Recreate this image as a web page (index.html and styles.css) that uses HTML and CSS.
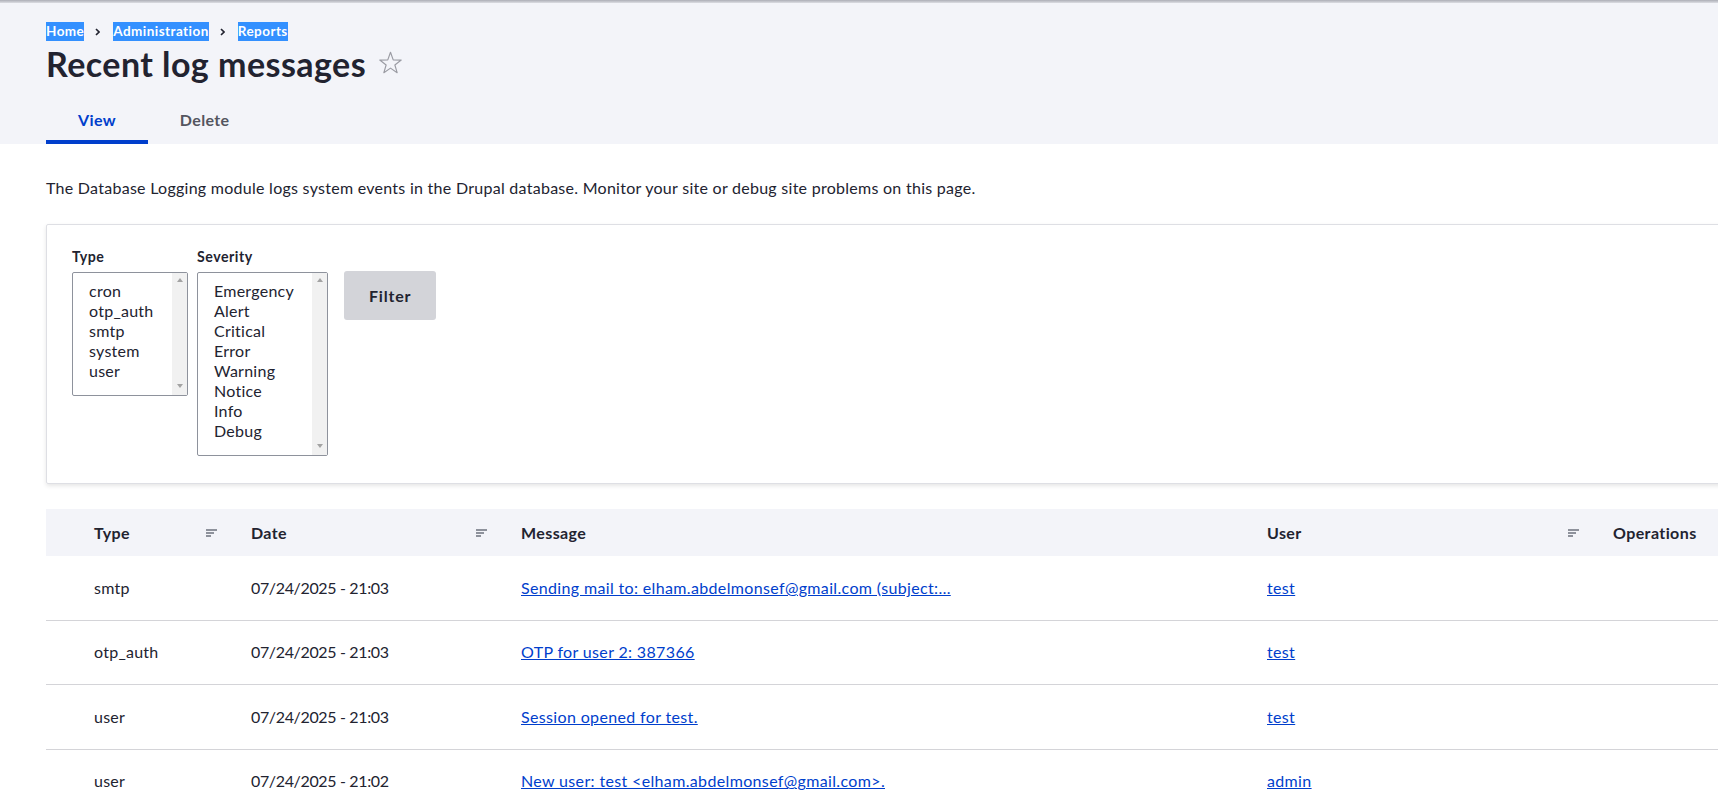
FILE: index.html
```html
<!DOCTYPE html>
<html lang="en">
<head>
<meta charset="utf-8">
<title>Recent log messages</title>
<link rel="stylesheet" href="styles.css">
</head>
<body>
<div class="toolbar-shadow"></div>
<header class="page-header">
  <nav class="breadcrumb">
    <span class="crumb">Home</span>
    <svg class="crumb-sep" viewBox="0 0 5 8"><path d="M1 1l3 3-3 3" fill="none" stroke="#222330" stroke-width="1.6"/></svg>
    <span class="crumb">Administration</span>
    <svg class="crumb-sep" viewBox="0 0 5 8"><path d="M1 1l3 3-3 3" fill="none" stroke="#222330" stroke-width="1.6"/></svg>
    <span class="crumb">Reports</span>
  </nav>
  <div class="title-row">
    <h1 class="page-title">Recent log messages</h1>
    <svg class="star" viewBox="0 0 22 22"><path d="M11 1.2L13.59 8.44L21.27 8.66L15.18 13.36L17.35 20.74L11 16.4L4.65 20.74L6.82 13.36L0.73 8.66L8.41 8.44Z" fill="none" stroke="#9a9ba3" stroke-width="1.1" stroke-linejoin="round"/></svg>
  </div>
  <nav class="tabs">
    <a class="tab is-active">View</a>
    <a class="tab">Delete</a>
  </nav>
</header>
<main class="content">
  <p class="intro">The Database Logging module logs system events in the Drupal database. Monitor your site or debug site problems on this page.</p>
  <div class="filter-box">
    <div class="form-item form-item-type">
      <div class="form-label">Type</div>
      <div class="listbox listbox-type">
        <ul class="options">
          <li>cron</li>
          <li>otp_auth</li>
          <li>smtp</li>
          <li>system</li>
          <li>user</li>
        </ul>
        <div class="scrollbar"><span class="arrow up"></span><span class="arrow down"></span></div>
      </div>
    </div>
    <div class="form-item form-item-severity">
      <div class="form-label">Severity</div>
      <div class="listbox listbox-severity">
        <ul class="options">
          <li>Emergency</li>
          <li>Alert</li>
          <li>Critical</li>
          <li>Error</li>
          <li>Warning</li>
          <li>Notice</li>
          <li>Info</li>
          <li>Debug</li>
        </ul>
        <div class="scrollbar"><span class="arrow up"></span><span class="arrow down"></span></div>
      </div>
    </div>
    <button class="button">Filter</button>
  </div>
  <table class="log-table">
    <colgroup>
      <col class="col-type">
      <col class="col-date">
      <col class="col-message">
      <col class="col-user">
      <col class="col-ops">
    </colgroup>
    <thead>
      <tr>
        <th><div class="th-inner"><span>Type</span><svg class="sort" viewBox="0 0 11 8"><rect x="0" y="0" width="11" height="2"/><rect x="0" y="3" width="8" height="2"/><rect x="0" y="6" width="5" height="2"/></svg></div></th>
        <th><div class="th-inner"><span>Date</span><svg class="sort" viewBox="0 0 11 8"><rect x="0" y="0" width="11" height="2"/><rect x="0" y="3" width="8" height="2"/><rect x="0" y="6" width="5" height="2"/></svg></div></th>
        <th>Message</th>
        <th><div class="th-inner"><span>User</span><svg class="sort" viewBox="0 0 11 8"><rect x="0" y="0" width="11" height="2"/><rect x="0" y="3" width="8" height="2"/><rect x="0" y="6" width="5" height="2"/></svg></div></th>
        <th>Operations</th>
      </tr>
    </thead>
    <tbody>
      <tr>
        <td>smtp</td>
        <td class="date">07/24/2025 - 21:03</td>
        <td><a href="#">Sending mail to: elham.abdelmonsef@gmail.com (subject:…</a></td>
        <td><a href="#">test</a></td>
        <td></td>
      </tr>
      <tr>
        <td>otp_auth</td>
        <td class="date">07/24/2025 - 21:03</td>
        <td><a href="#">OTP for user 2: 387366</a></td>
        <td><a href="#">test</a></td>
        <td></td>
      </tr>
      <tr>
        <td>user</td>
        <td class="date">07/24/2025 - 21:03</td>
        <td><a href="#">Session opened for test.</a></td>
        <td><a href="#">test</a></td>
        <td></td>
      </tr>
      <tr>
        <td>user</td>
        <td class="date">07/24/2025 - 21:02</td>
        <td><a href="#">New user: test &lt;elham.abdelmonsef@gmail.com&gt;.</a></td>
        <td><a href="#">admin</a></td>
        <td></td>
      </tr>
    </tbody>
  </table>
</main>
</body>
</html>
```

FILE: styles.css
```css
* { box-sizing: border-box; }
html, body { margin: 0; padding: 0; overflow: hidden; }
body {
  font-family: Lato, "Open Sans", sans-serif;
  font-size: 16px;
  line-height: 1.5;
  letter-spacing: 0.25px;
  color: #222330;
  background: #fff;
}
.toolbar-shadow {
  height: 3px;
  background: linear-gradient(#acaeb6, #dcdde3);
}
.page-header {
  background: #f3f4f9;
  padding: 19px 46px 0;
}
.breadcrumb {
  display: flex;
  align-items: center;
  height: 19px;
  font-size: 13.5px;
  font-weight: 700;
  line-height: 19px;
  letter-spacing: 0.45px;
}
.crumb { background: #3390ff; color: #fff; }
.crumb-sep { width: 5px; height: 8px; margin: 0 13px 0 11px; }
.title-row {
  display: flex;
  align-items: center;
  height: 39px;
  margin-top: 3px;
}
.page-title {
  margin: 0;
  font-size: 34px;
  line-height: 39px;
  font-weight: 700;
  letter-spacing: 0.45px;
}
.star { width: 23px; height: 23px; margin-left: 13px; margin-top: -2px; }
.tabs { display: flex; margin-top: 13px; }
.tab {
  padding: 12px 32px 8px;
  line-height: 24px;
  font-weight: 700;
  letter-spacing: 0.35px;
  color: #545560;
  border-bottom: 4px solid transparent;
}
.tab.is-active { color: #003ecc; border-bottom-color: #003ecc; }

.content { padding-left: 46px; }
.intro { margin: 32px 0 0; line-height: 24px; letter-spacing: 0.27px; }

.filter-box {
  display: flex;
  align-items: flex-start;
  width: calc(100% + 20px);
  margin-top: 24px;
  padding: 23px 24px 27px 25px;
  border: 1px solid #dedfe4;
  border-radius: 2px;
  box-shadow: 0 2px 4px rgba(0, 0, 0, 0.1);
}
.form-item-type { margin-right: 9px; }
.form-item-severity { margin-right: 16px; }
.form-label {
  font-size: 14.2px;
  font-weight: 700;
  line-height: 18px;
  letter-spacing: 0.5px;
  margin-bottom: 6px;
}
.listbox {
  display: flex;
  border: 1px solid #8e929c;
  border-radius: 2px;
  background: #fff;
}
.listbox-type { width: 116px; height: 124px; }
.listbox-severity { width: 131px; height: 184px; }
.options {
  flex: 1;
  list-style: none;
  margin: 0;
  padding: 8px 0 0 16px;
  line-height: 20px;
}
.scrollbar {
  width: 15px;
  background: #f1f1f1;
  display: flex;
  flex-direction: column;
  justify-content: space-between;
  align-items: center;
  padding: 5px 0 7px;
}
.arrow {
  width: 0;
  height: 0;
  border-left: 3.5px solid transparent;
  border-right: 3.5px solid transparent;
}
.arrow.up { border-bottom: 4px solid #a3a3a3; }
.arrow.down { border-top: 4px solid #a3a3a3; }

.button {
  margin-top: 23px;
  height: 49px;
  padding: 0 24px;
  font-family: inherit;
  font-size: 16px;
  font-weight: 700;
  line-height: 16px;
  letter-spacing: 0.8px;
  color: #222330;
  background: #d3d4d9;
  border: 1px solid transparent;
  border-radius: 3px;
}

.log-table {
  margin-top: 25px;
  width: 1672px;
  table-layout: fixed;
  border-collapse: collapse;
}
.col-type { width: 189px; }
.col-date { width: 270px; }
.col-message { width: 746px; }
.col-user { width: 346px; }
.col-ops { width: 121px; }
.log-table th {
  background: #f3f4f9;
  text-align: left;
  font-weight: 700;
  line-height: 24px;
  letter-spacing: 0.4px;
  padding: 11.5px 16px;
}
.log-table td {
  padding: 19.75px 16px;
  line-height: 24px;
  border-bottom: 1px solid #d4d4d8;
  white-space: nowrap;
}
.log-table td.date { letter-spacing: -0.35px; }
.log-table th:first-child,
.log-table td:first-child { padding-left: 48px; }
.th-inner {
  display: flex;
  justify-content: space-between;
  align-items: center;
}
.sort { width: 11px; height: 8px; fill: #8e929c; margin-right: 2px; }
.log-table a { color: #003ecc; text-decoration: underline; letter-spacing: 0.35px; }
```
